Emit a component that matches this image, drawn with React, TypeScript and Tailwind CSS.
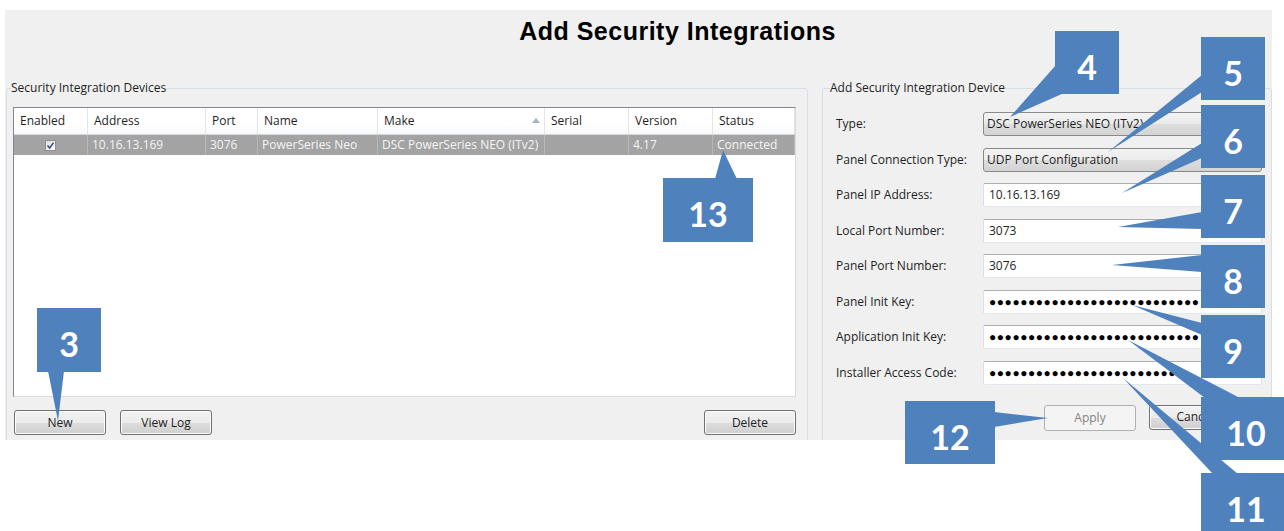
import React from 'react'

type Column = { readonly title: string; readonly sorted?: boolean }

const columns: ReadonlyArray<Column> = [
  { title: 'Enabled' },
  { title: 'Address' },
  { title: 'Port' },
  { title: 'Name' },
  { title: 'Make', sorted: true },
  { title: 'Serial' },
  { title: 'Version' },
  { title: 'Status' },
]

const device = ['', '10.16.13.169', '3076', 'PowerSeries Neo', 'DSC PowerSeries NEO (ITv2)', '', '4.17', 'Connected']

type Field =
  | { readonly label: string; readonly kind: 'select' | 'text'; readonly value: string }
  | { readonly label: string; readonly kind: 'secret'; readonly length: number }

const fields: ReadonlyArray<Field> = [
  { label: 'Type:', kind: 'select', value: 'DSC PowerSeries NEO (ITv2)' },
  { label: 'Panel Connection Type:', kind: 'select', value: 'UDP Port Configuration' },
  { label: 'Panel IP Address:', kind: 'text', value: '10.16.13.169' },
  { label: 'Local Port Number:', kind: 'text', value: '3073' },
  { label: 'Panel Port Number:', kind: 'text', value: '3076' },
  { label: 'Panel Init Key:', kind: 'secret', length: 27 },
  { label: 'Application Init Key:', kind: 'secret', length: 27 },
  { label: 'Installer Access Code:', kind: 'secret', length: 24 },
]

// numbered markers drawn over the dialog, each with a pointer wedge
const callouts = [
  { label: '3', className: 'left-[37px] top-[308px] w-[64px] h-[64px]', wedge: '48,371 64,371 58,421' },
  { label: '4', className: 'left-[1055px] top-[31px] w-[64px] h-[63px]', wedge: '1010,117 1056,65 1056,93 1064,93' },
  { label: '5', className: 'left-[1201px] top-[37px] w-[64px] h-[63px]', wedge: '1108,152 1202,75 1202,92' },
  { label: '6', className: 'left-[1201px] top-[105px] w-[64px] h-[63px]', wedge: '1122,193 1202,143 1202,158' },
  { label: '7', className: 'left-[1201px] top-[175px] w-[64px] h-[63px]', wedge: '1118,227 1202,212 1202,229' },
  { label: '8', className: 'left-[1201px] top-[245px] w-[64px] h-[63px]', wedge: '1112,265 1202,255 1202,272' },
  { label: '9', className: 'left-[1201px] top-[315px] w-[64px] h-[63px]', wedge: '1132,305 1202,323 1202,335' },
  { label: '10', className: 'left-[1201px] top-[397px] w-[90px] h-[63px]', wedge: '1128,340 1240,398 1205,398' },
  { label: '11', className: 'left-[1201px] top-[473px] w-[90px] h-[63px]', wedge: '1123,378 1238,474 1213,474' },
  { label: '12', className: 'left-[905px] top-[401px] w-[90px] h-[63px]', wedge: '1048,418 994,412 994,427' },
  { label: '13', className: 'left-[663px] top-[178px] w-[90px] h-[64px]', wedge: '723,150 715,179 737,179' },
]

const button =
  'h-[25px] w-[92px] rounded-[3px] border border-[#707070] bg-[linear-gradient(#f2f2f2,#ebebeb_50%,#dddddd_51%,#cfcfcf)] text-[12px] text-[#1e1e1e] shadow-[inset_0_0_0_1px_#fcfcfc]'

const disabledButton =
  'h-[26px] w-[92px] rounded-[3px] border border-[#adb2b5] bg-[#f4f4f4] text-[12px] text-[#838383]'

const CheckBox = (): JSX.Element => (
  <span className="flex h-[11px] w-[11px] items-center justify-center border border-[#8e8f8f] bg-[linear-gradient(135deg,#dcdcdc,#ffffff)]">
    <svg viewBox="0 0 9 9" className="h-[9px] w-[9px]">
      <path d="M1.5 4.5 L3.7 7 L7.6 1.6" fill="none" stroke="#3b4f86" strokeWidth="1.6" />
    </svg>
  </span>
)

const DeviceTable = (): JSX.Element => (
  <div className="h-[290px] w-[783px] border border-[#d9d9d9] border-l-[#828790] border-t-[#828790] bg-white">
    <div className="grid grid-cols-[74px_118px_52px_120px_167px_84px_84px_82px] border-b border-[#d5d5d5] bg-[linear-gradient(#ffffff_60%,#f7f8fa)]">
      {columns.map(c => (
        <div
          key={c.title}
          className="flex h-[26px] items-center border-r border-[#e5e5e5] pl-[6px] pr-[4px] text-[12px] text-[#1e1e1e]"
        >
          <span>{c.title}</span>
          {c.sorted ? (
            <svg viewBox="0 0 8 5" className="ml-auto mb-[2px] h-[5px] w-[8px]">
              <path d="M0 5 L4 0 L8 5 Z" fill="#a7b1bf" />
            </svg>
          ) : null}
        </div>
      ))}
    </div>
    <div className="grid grid-cols-[74px_118px_52px_120px_167px_84px_84px_82px] bg-[#a3a3a3]">
      {device.map((v, i) =>
        i === 0 ? (
          <div key={i} className="flex h-[20px] items-center justify-center border-r border-[#b8b8b8]">
            <CheckBox />
          </div>
        ) : (
          <div
            key={i}
            className="flex h-[20px] items-center overflow-hidden whitespace-nowrap border-r border-[#b8b8b8] pl-[4px] text-[12px] text-[#f4f4f4]"
          >
            {v}
          </div>
        ),
      )}
    </div>
  </div>
)

const Secret = ({ length }: { readonly length: number }): JSX.Element => (
  <span className="font-['Liberation_Sans',sans-serif] text-[12px] leading-none tracking-[0.55px] text-black">
    {'●'.repeat(length)}
  </span>
)

const FieldInput = ({ field }: { readonly field: Field }): JSX.Element => {
  if (field.kind === 'select') {
    return (
      <div className="flex h-[24px] items-center rounded-[3px] border border-[#8a8a8a] bg-[linear-gradient(#f3f3f3,#ebebeb_50%,#dedede_51%,#d3d3d3)] pl-[3px] pr-[6px] text-[12px] text-[#1e1e1e]">
        <span>{field.value}</span>
        <svg viewBox="0 0 7 4" className="ml-auto h-[4px] w-[7px]">
          <path d="M0 0 L7 0 L3.5 4 Z" fill="#2b2b2b" />
        </svg>
      </div>
    )
  }
  return (
    <div className="flex h-[24px] items-center rounded-[2px] border border-[#dbdfe6] border-b-[#e3e9ef] border-t-[#abadb3] bg-white pl-[5px] text-[12px] text-[#1e1e1e]">
      {field.kind === 'secret' ? <Secret length={field.length} /> : field.value}
    </div>
  )
}

export default function App(): JSX.Element {
  return (
    <div className="relative h-[531px] w-[1284px] overflow-hidden bg-white font-['Open_Sans','Noto_Sans',sans-serif]">
      <div className="ml-[5px] mt-[10px] h-[430px] w-[1267px] overflow-hidden bg-[#f0f0f0]">
        <h1 className="pl-[78px] pt-[7px] text-center font-['Liberation_Sans',Arial,sans-serif] text-[25px] font-bold leading-[28px] tracking-[0.5px] text-black">
          Add Security Integrations
        </h1>

        <div className="mt-[35px] flex gap-[14px] pl-[1px]">
          <fieldset className="h-[380px] w-[802px] shrink-0 rounded-[3px] border border-[#d5dfe5] p-0">
            <legend className="ml-[4px] p-0 text-[12px] leading-[16px] text-[#1e1e1e]">
              Security Integration Devices
            </legend>
            <div className="px-[6px] pt-[11px]">
              <DeviceTable />
              <div className="mt-[13px] flex w-[783px] gap-[14px] pl-[1px]">
                <button type="button" className={button}>
                  New
                </button>
                <button type="button" className={button}>
                  View Log
                </button>
                <button type="button" className={`ml-auto ${button}`}>
                  Delete
                </button>
              </div>
            </div>
          </fieldset>

          <fieldset className="h-[380px] w-[450px] shrink-0 rounded-[3px] border border-[#d5dfe5] p-0">
            <legend className="ml-[7px] p-0 text-[12px] leading-[16px] text-[#1e1e1e]">
              Add Security Integration Device
            </legend>
            <div className="pl-[13px] pr-[8px] pt-[16px]">
              <div className="grid grid-cols-[147px_279px] gap-y-[11.5px]">
                {fields.map(f => (
                  <React.Fragment key={f.label}>
                    <span className="flex h-[24px] items-center text-[12px] text-[#1e1e1e]">{f.label}</span>
                    <FieldInput field={f} />
                  </React.Fragment>
                ))}
              </div>
              <div className="mt-[20px] flex justify-end gap-[13px] pr-[22px]">
                <button type="button" disabled className={disabledButton}>
                  Apply
                </button>
                <button type="button" className={button}>
                  Cancel
                </button>
              </div>
            </div>
          </fieldset>
        </div>
      </div>

      <svg className="absolute left-0 top-0 h-[531px] w-[1284px]" viewBox="0 0 1284 531">
        {callouts.map(c => (
          <polygon key={c.label} points={c.wedge} fill="#4f81bd" />
        ))}
      </svg>
      {callouts.map(c => (
        <div
          key={c.label}
          className={`absolute flex items-center justify-center bg-[#4f81bd] pt-[8px] font-['Lato','Open_Sans',sans-serif] text-[34px] font-bold leading-none text-white ${c.className}`}
        >
          {c.label}
        </div>
      ))}
    </div>
  )
}
